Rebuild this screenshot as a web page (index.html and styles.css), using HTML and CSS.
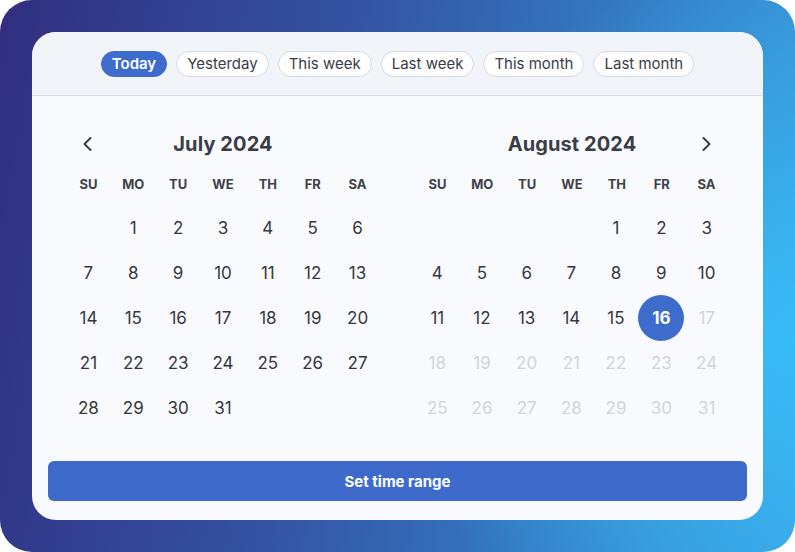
FILE: index.html
```html
<!DOCTYPE html>
<html lang="en">
<head>
    <meta charset="UTF-8">
    <title>Date range picker</title>
    <link rel="stylesheet" href="styles.css">
</head>
<body>
<div class="backdrop">
    <div class="picker">
        <div class="presets">
            <span class="chip active">Today</span>
            <span class="chip">Yesterday</span>
            <span class="chip">This week</span>
            <span class="chip">Last week</span>
            <span class="chip">This month</span>
            <span class="chip">Last month</span>
        </div>
        <div class="months">
            <div class="month">
                <div class="monthHead">
                    <a href="javascript:;" class="navBtn prev">
                        <svg width="20" height="20" viewBox="0 0 20 20"><path d="M12.5 4L6.5 10l6 6" fill="none" stroke="#3a3d45" stroke-width="2" stroke-linecap="round" stroke-linejoin="round"/></svg>
                    </a>
                    <h2 class="title">July 2024</h2>
                </div>
                <ul class="week">
                    <li>SU</li><li>MO</li><li>TU</li><li>WE</li><li>TH</li><li>FR</li><li>SA</li>
                </ul>
                <ul class="days">
                    <li></li><li>1</li><li>2</li><li>3</li><li>4</li><li>5</li><li>6</li>
                    <li>7</li><li>8</li><li>9</li><li>10</li><li>11</li><li>12</li><li>13</li>
                    <li>14</li><li>15</li><li>16</li><li>17</li><li>18</li><li>19</li><li>20</li>
                    <li>21</li><li>22</li><li>23</li><li>24</li><li>25</li><li>26</li><li>27</li>
                    <li>28</li><li>29</li><li>30</li><li>31</li>
                </ul>
            </div>
            <div class="month">
                <div class="monthHead">
                    <h2 class="title">August 2024</h2>
                    <a href="javascript:;" class="navBtn next">
                        <svg width="20" height="20" viewBox="0 0 20 20"><path d="M7.5 4l6 6-6 6" fill="none" stroke="#3a3d45" stroke-width="2" stroke-linecap="round" stroke-linejoin="round"/></svg>
                    </a>
                </div>
                <ul class="week">
                    <li>SU</li><li>MO</li><li>TU</li><li>WE</li><li>TH</li><li>FR</li><li>SA</li>
                </ul>
                <ul class="days">
                    <li></li><li></li><li></li><li></li><li>1</li><li>2</li><li>3</li>
                    <li>4</li><li>5</li><li>6</li><li>7</li><li>8</li><li>9</li><li>10</li>
                    <li>11</li><li>12</li><li>13</li><li>14</li><li>15</li><li class="today"><span>16</span></li><li class="future">17</li>
                    <li class="future">18</li><li class="future">19</li><li class="future">20</li><li class="future">21</li><li class="future">22</li><li class="future">23</li><li class="future">24</li>
                    <li class="future">25</li><li class="future">26</li><li class="future">27</li><li class="future">28</li><li class="future">29</li><li class="future">30</li><li class="future">31</li>
                </ul>
            </div>
        </div>
        <div class="footer">
            <a href="javascript:;" class="applyBtn">Set time range</a>
        </div>
    </div>
</div>
</body>
</html>
```

FILE: styles.css
```css
*{margin:0;padding:0;box-sizing:border-box}
ul{list-style:none}
a{text-decoration:none}
html,body{background:#fff}
body{font-family:Inter,"Noto Sans",sans-serif;color:#333}

.backdrop{width:795px;height:552px;padding:32px;border-radius:32px;
    background:radial-gradient(circle at 100% 62%,rgba(56,189,248,1) 0,rgba(56,189,248,0) 45%),
    linear-gradient(100deg,#312e81 0%,#3453a2 40%,#3479c2 70%,#3a9ddf 100%)}

.picker{height:488px;border-radius:24px;background:#f9fafd;overflow:hidden}

.presets{height:64px;display:flex;justify-content:center;align-items:center;gap:9px;
    background:#f1f4f9;border-bottom:1px solid #d8dde6;padding-top:1px}
.chip{height:26px;line-height:24px;padding:0 10px;border:1px solid #d3d9e2;border-radius:13px;
    background:#fff;font-size:15px;color:#3a3d45}
.chip.active{background:#3d6ccc;border-color:#3d6ccc;color:#fff;font-weight:600}

.months{display:flex;justify-content:space-between;padding:30px 34px 0}
.month{width:314px}
.monthHead{height:36px;display:flex;align-items:center;justify-content:center;position:relative}
.title{font-size:20px;font-weight:700;color:#3a3d45;letter-spacing:0.1px}
.navBtn{position:absolute;top:8px;width:20px;height:20px;display:block}
.navBtn svg{display:block}
.prev{left:12px}
.next{right:13px}

.week{display:grid;grid-template-columns:repeat(7,1fr);height:43px;align-items:center}
.week li{text-align:center;font-size:13px;font-weight:700;color:#3f4149}

.days{display:grid;grid-template-columns:repeat(7,1fr);grid-auto-rows:45px}
.days li{display:flex;align-items:center;justify-content:center;font-size:17px;color:#35373d}
.days li.future{color:#d3d5da}
.days li.today span{width:46px;height:46px;border-radius:50%;background:#3d6ccc;color:#fff;
    font-weight:700;display:flex;align-items:center;justify-content:center}

.footer{padding:31px 16px 0}
.applyBtn{display:block;height:40px;line-height:41px;border-radius:6px;background:#3e6bcb;
    color:#fff;font-size:15px;font-weight:700;text-align:center}
```
